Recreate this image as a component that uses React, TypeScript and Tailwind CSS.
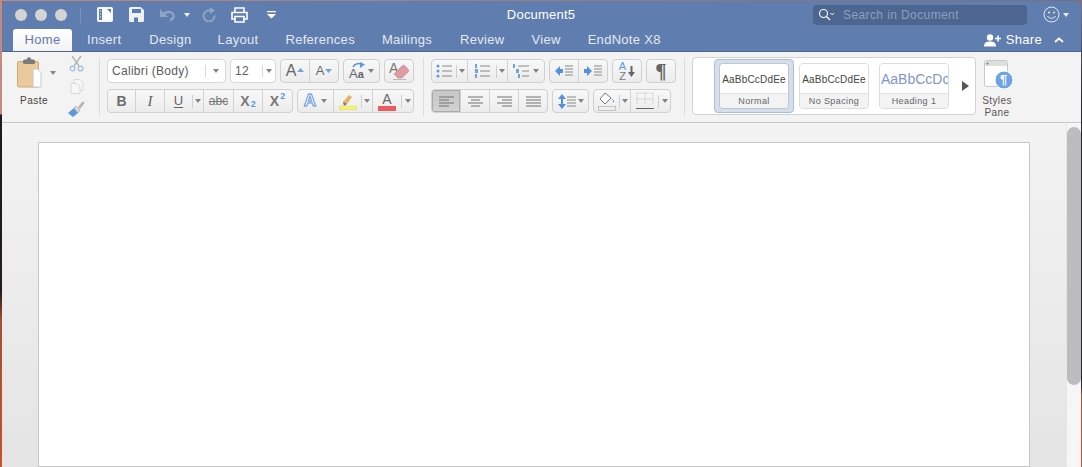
import type { ReactNode } from "react";

const tabs = [
  { label: "Insert", cls: "" },
  { label: "Design", cls: "ml-[1px]" },
  { label: "Layout", cls: "-ml-[1px]" },
  { label: "References", cls: "" },
  { label: "Mailings", cls: "" },
  { label: "Review", cls: "ml-[1px]" },
  { label: "View", cls: "" },
  { label: "EndNote X8", cls: "" },
];

function Caret({ className = "fill-[#858585]" }: { className?: string }) {
  return (
    <svg width="6" height="4" viewBox="0 0 6 4" className={className}>
      <path d="M0 0h6L3 4z" />
    </svg>
  );
}

function Seg({ w, active, open, children }: { w: number; active?: boolean; open?: boolean; children?: ReactNode }) {
  return (
    <div
      style={{ width: w }}
      className={`flex h-full items-center justify-center ${open ? "" : "border-r border-[#d2d2d2] last:border-r-0"} ${active ? "bg-gradient-to-b from-[#c6c6c6] to-[#d2d2d2] shadow-[inset_0_0_0_1px_#ababab]" : ""}`}
    >
      {children}
    </div>
  );
}

// short divider in front of a split button's caret
function Tick() {
  return <span className="h-[13px] self-center border-l border-[#cfcfcf]" />;
}

function Group({ ml = 4, children }: { ml?: number; children: ReactNode }) {
  return (
    <div
      style={{ marginLeft: ml }}
      className="flex h-6 overflow-hidden rounded-[4px] border border-[#d0d0d0] bg-gradient-to-b from-[#f8f8f8] to-[#ececec]"
    >
      {children}
    </div>
  );
}

function Combo({ w, label, inner }: { w: number; label: string; inner: number }) {
  return (
    <div style={{ width: w, marginRight: 4 }} className="flex h-6 items-center rounded-[4px] border border-[#d8d8d8] bg-white text-[12px] text-[#5c5c5c]">
      <span style={{ width: inner }} className="pl-[4px] tracking-[0.3px]">{label}</span>
      <span className="h-3 border-l border-[#d8d8d8]" />
      <span className="flex flex-1 justify-center"><Caret /></span>
    </div>
  );
}

function ListIcon({ kind }: { kind: "bullet" | "number" | "multi" }) {
  return (
    <svg width="17" height="14" viewBox="0 0 17 14">
      {kind === "bullet" && (
        <g fill="#5d97dc">
          <circle cx="2" cy="2" r="1.5" />
          <circle cx="2" cy="7" r="1.5" />
          <circle cx="2" cy="12" r="1.5" />
        </g>
      )}
      {kind !== "bullet" && (
        <g fill="#6ea4e4">
          <rect x={kind === "multi" ? 0 : 1} y="0" width="2" height="4" />
          <rect x={kind === "multi" ? 3 : 1} y="5" width="3" height="4" />
          <rect x={kind === "multi" ? 5 : 1} y="10" width="2" height="4" />
        </g>
      )}
      <path
        d={kind === "multi" ? "M5 2h11M9 7h7M9 12h7" : "M6 2h10M6 7h10M6 12h10"}
        stroke="#888"
        strokeWidth="1"
      />
    </svg>
  );
}

function AlignIcon({ kind }: { kind: "left" | "center" | "right" | "justify" }) {
  const d = {
    left: "M1 2h15M1 5h10M1 8h15M1 11h10",
    center: "M1 2h15M4 5h9M1 8h15M4 11h9",
    right: "M1 2h15M6 5h10M1 8h15M6 11h10",
    justify: "M1 2h15M1 5h15M1 8h15M1 11h15",
  }[kind];
  return (
    <svg width="17" height="13" viewBox="0 0 17 13">
      <path d={d} stroke="#717171" strokeWidth="1" />
    </svg>
  );
}

function IndentIcon({ dir }: { dir: "in" | "out" }) {
  return (
    <svg width="19" height="12" viewBox="0 0 19 12">
      {dir === "out" ? (
        <path d="M0 6l5-5v3h3v4H5v3z" fill="#4f93e0" />
      ) : (
        <path d="M8 6L3 1v3H0v4h3v3z" fill="#4f93e0" />
      )}
      <path d="M10 1h8M10 4h8M10 7h8M10 10h8" stroke="#888" strokeWidth="1" />
    </svg>
  );
}

function StyleCard({ sample, name, selected, sampleClass }: { sample: string; name: string; selected?: boolean; sampleClass: string }) {
  const card = (
    <div className={`flex h-[46px] w-[70px] flex-col overflow-hidden rounded-[4px] border ${selected ? "border-[#bcc6d4]" : "border-[#dcdcdc]"}`}>
      <div className={`flex h-[31px] items-center overflow-hidden whitespace-nowrap bg-white pt-[2px] ${sampleClass}`}>{sample}</div>
      <div className="flex flex-1 items-center justify-center border-t border-[#e4e4e4] bg-[#f3f3f3] pt-[1px] text-[9px] tracking-[0.4px] text-[#666]">{name}</div>
    </div>
  );
  if (selected) {
    return <div className="flex h-[54px] w-[80px] items-center justify-center rounded-[4px] border border-[#a9bfdc] bg-[#d5dfec]">{card}</div>;
  }
  return card;
}

export default function App() {
  return (
    <div className="flex h-[467px] w-[1082px] flex-col overflow-hidden bg-[#8a6a72] font-['Liberation_Sans',sans-serif]">
      <div className="h-px bg-gradient-to-r from-[#b98a80] to-[#76707f]" />
      <div className="flex min-h-0 flex-1">
        <div className="w-[2px] bg-[linear-gradient(to_bottom,#c48a80_0,#c48a80_113px,#1e1a22_114px,#241a22_290px,#a8502e_320px,#c9502a_466px)]" />
        <div className="flex min-w-0 flex-1 flex-col">
          <header className="h-[50px] rounded-t-[5px] bg-[#5f7dae]">
            <div className="flex h-[27px] items-center pr-[12px]">
              <div className="ml-[13px] flex gap-2">
                <span className="h-3 w-3 rounded-full bg-[#d4d4d4]" />
                <span className="h-3 w-3 rounded-full bg-[#d4d4d4]" />
                <span className="h-3 w-3 rounded-full bg-[#d4d4d4]" />
              </div>
              <span className="ml-[13px] h-4 border-l border-[#7b94bc]" />
              <svg width="16" height="15" viewBox="0 0 16 15" className="ml-4">
                <rect x=".75" y=".75" width="14.5" height="13.5" rx="1" fill="#fff" stroke="#f2f5f9" strokeWidth="1.5" />
                <path d="M2 2h3v11H2z" fill="#5f7dae" />
                <path d="M3 4h1M3 7h1M3 10h1" stroke="#fff" />
                <path d="M10 2h4v4z" fill="#5f7dae" />
              </svg>
              <svg width="15" height="15" viewBox="0 0 15 15" className="ml-4">
                <path d="M1.5 0h10L15 3v10.5a1.5 1.5 0 0 1-1.5 1.5h-12A1.5 1.5 0 0 1 0 13.5v-12A1.5 1.5 0 0 1 1.5 0z" fill="#eef1f6" />
                <path d="M3 2h9v4H3zM5 10.5h4v4.5H5z" fill="#5f7dae" />
              </svg>
              <svg width="17" height="13" viewBox="0 0 17 13" className="ml-[15px]">
                <path d="M1 1v8h8z" fill="#8ea4c8" />
                <path d="M4.5 6.5C7 3.5 12 3 14 6c1.5 2.5 0 5.5-3 6" fill="none" stroke="#8ea4c8" strokeWidth="2.4" />
              </svg>
              <span className="ml-[8px]"><Caret className="fill-[#eef1f6]" /></span>
              <svg width="14" height="15" viewBox="0 0 14 15" className="ml-[12px]">
                <path d="M9.5 4a5.5 5.5 0 1 0 3 4.5" fill="none" stroke="#8ea4c8" strokeWidth="2" />
                <path d="M8 0v7l5-3.5z" fill="#8ea4c8" />
              </svg>
              <svg width="17" height="16" viewBox="0 0 17 16" className="ml-[15px]">
                <path d="M4 5V1h9v4M4 12H1V5.5h15V12h-3" fill="none" stroke="#fff" strokeWidth="1.6" />
                <path d="M4 9.5h9V15H4z" fill="none" stroke="#fff" strokeWidth="1.6" />
              </svg>
              <svg width="9" height="8" viewBox="0 0 9 8" className="ml-[19px]">
                <path d="M0 0h9v1.2H0zM0 3h9L4.5 7.5z" fill="#fff" />
              </svg>
              <div className="flex flex-1 justify-center pr-[7px] text-[13px] tracking-[0.2px] text-white">Document5</div>
              <div className="flex h-5 w-[214px] items-center rounded-[4px] bg-[#4d668f] pl-[5px]">
                <svg width="17" height="13" viewBox="0 0 17 13">
                  <circle cx="5.5" cy="5.5" r="4" fill="none" stroke="#fff" strokeWidth="1.1" />
                  <path d="M8.5 8.5l3.5 3.5" stroke="#fff" strokeWidth="1.2" />
                  <path d="M12.5 5l1.7 1.8L16 5" fill="none" stroke="#fff" />
                </svg>
                <span className="ml-[8px] text-[12px] tracking-[0.4px] text-[#8ba0c2]">Search in Document</span>
              </div>
              <svg width="17" height="17" viewBox="0 0 17 17" className="ml-[16px]">
                <circle cx="8.5" cy="8.5" r="7.5" fill="none" stroke="#e8edf5" />
                <circle cx="6" cy="6.5" r="1" fill="#e8edf5" />
                <circle cx="11" cy="6.5" r="1" fill="#e8edf5" />
                <path d="M4.5 10c1.5 3 6.5 3 8 0" fill="none" stroke="#e8edf5" />
              </svg>
              <span className="ml-[3px]"><Caret className="fill-[#e8edf5]" /></span>
            </div>
            <div className="flex h-[23px] items-end text-[13px] tracking-[0.3px] text-[#e3e9f2]">
              <div className="ml-[11px] flex h-[22px] w-[59px] items-center justify-center rounded-t-[3px] bg-gradient-to-b from-white to-[#f3f3f3] text-[#5f7dae]">Home</div>
              <div className="ml-[15px] flex h-[22px] items-center gap-[27px]">
                {tabs.map((t) => (
                  <span key={t.label} className={t.cls}>{t.label}</span>
                ))}
              </div>
              <div className="ml-auto mr-[17px] flex h-[22px] items-center">
                <svg width="17" height="13" viewBox="0 0 17 13">
                  <circle cx="6" cy="3.5" r="3.2" fill="#fff" />
                  <path d="M0 12.5c0-4 2.5-5 6-5s6 1 6 5z" fill="#fff" />
                  <path d="M11 4.5h6M14 1.5v6" stroke="#fff" strokeWidth="1.6" />
                </svg>
                <span className="ml-[5px] text-white">Share</span>
                <svg width="10" height="6" viewBox="0 0 10 6" className="ml-[12px]">
                  <path d="M1 5l4-3.5L9 5" fill="none" stroke="#fff" strokeWidth="1.8" />
                </svg>
              </div>
            </div>
          </header>

          <div className="flex h-[72px] border-y border-t-[#4d668f] border-b-[#c8c8c8] bg-[#f3f3f3]">
            {/* clipboard */}
            <div className="flex w-[97px] pl-[15px]">
              <div className="flex w-[45px] flex-col pt-[5px]">
                <div className="flex items-end">
                  <svg width="25" height="31" viewBox="0 0 25 31">
                    <rect x="0.5" y="4.5" width="21" height="25.5" rx="1.5" fill="#eac99a" stroke="#cfa873" />
                    <rect x="6" y="2.5" width="12" height="4.5" rx="1.5" fill="#7b7b7b" />
                    <circle cx="12" cy="2.5" r="2.2" fill="#7b7b7b" />
                    <path d="M16 12h4.5l3.5 3.5V30H16z" fill="#fff" stroke="#c8c8c8" />
                  </svg>
                  <span className="mb-[13px] ml-[8px]"><Caret /></span>
                </div>
                <span className="mt-[5px] ml-[3px] text-[10px] tracking-[0.5px] text-[#444]">Paste</span>
              </div>
              <div className="ml-[6px] flex flex-col items-center gap-[7px] pt-[3px]">
                <svg width="15" height="17" viewBox="0 0 15 17">
                  <path d="M3 1l7 10M12 1L5 11" stroke="#b4b4b4" strokeWidth="1.4" />
                  <circle cx="3.5" cy="13.5" r="2.4" fill="none" stroke="#9cbde2" strokeWidth="1.2" />
                  <circle cx="11.5" cy="13.5" r="2.4" fill="none" stroke="#9cbde2" strokeWidth="1.2" />
                </svg>
                <svg width="14" height="15" viewBox="0 0 14 15">
                  <path d="M4 .5h6l3 3v8H4z" fill="#f7f7f7" stroke="#d8d8d8" />
                  <path d="M1 4.5h6l3 3v7H1z" fill="#f7f7f7" stroke="#d8d8d8" />
                </svg>
                <svg width="17" height="16" viewBox="0 0 17 16">
                  <path d="M0 12l6-5 4 5-5 4z" fill="#5d97dc" />
                  <path d="M6 7l2-2 4 4-2 3z" fill="#dcdcdc" stroke="#999" strokeWidth=".6" />
                  <path d="M10 6l4-5c2-1 3 1 2 2l-4 5z" fill="#b4b4b4" />
                </svg>
              </div>
            </div>
            <div className="my-[6px] border-l border-[#dcdcdc]" />

            {/* font */}
            <div className="flex w-[323px] flex-col gap-[6px] pt-[7px] pl-[7px]">
              <div className="flex">
                <Combo w={119} inner={97} label="Calibri (Body)" />
                <Combo w={46} inner={31} label="12" />
                <Group ml={0}>
                  <Seg w={29}>
                    <span className="text-[16px] text-[#666]">A</span>
                    <svg width="7" height="4" viewBox="0 0 7 4" className="ml-[1px] mb-[3px]"><path d="M0 4h7L3.5 0z" fill="#6ea4e4" /></svg>
                  </Seg>
                  <Seg w={28}>
                    <span className="text-[13px] text-[#666]">A</span>
                    <svg width="7" height="4" viewBox="0 0 7 4" className="ml-[1px]"><path d="M0 0h7L3.5 4z" fill="#6ea4e4" /></svg>
                  </Seg>
                </Group>
                <Group>
                  <Seg w={35}>
                    <div className="relative flex h-full items-end pb-[2px] leading-none text-[#666]">
                      <span className="text-[13px]">A</span>
                      <span className="text-[11px] font-bold">a</span>
                      <svg width="13" height="8" viewBox="0 0 13 8" className="absolute left-[3px] top-[2px]">
                        <path d="M1 5c2-3 5-4 8-3" fill="none" stroke="#5d97dc" strokeWidth="1.5" />
                        <path d="M8 0l5 2.5L8 6z" fill="#5d97dc" />
                      </svg>
                    </div>
                    <span className="ml-[4px]"><Caret /></span>
                  </Seg>
                </Group>
                <Group>
                  <Seg w={28}>
                    <div className="relative h-full w-[24px]">
                      <span className="absolute left-[2px] top-[1px] text-[14px] leading-none text-[#777]">A</span>
                      <svg width="18" height="16" viewBox="0 0 18 16" className="absolute left-[6px] top-[4px]">
                        <path d="M1 10l8-8c1-1 2-1 3 0l3 3c1 1 1 2 0 3l-6 6H5z" fill="#dd9ba2" stroke="#c78088" strokeWidth=".6" />
                        <path d="M0 15.5h13" stroke="#b8b8b8" />
                      </svg>
                    </div>
                  </Seg>
                </Group>
              </div>
              <div className="flex">
                <Group ml={0}>
                  <Seg w={28}><span className="text-[14px] font-bold text-[#6c6c6c]">B</span></Seg>
                  <Seg w={29}><span className="font-['Liberation_Serif',serif] text-[15px] italic text-[#666]">I</span></Seg>
                  <Seg w={27} open><span className="text-[13px] text-[#666] underline underline-offset-2">U</span></Seg>
                  <Tick />
                  <Seg w={11}><Caret /></Seg>
                  <Seg w={30}><span className="text-[12px] text-[#777] line-through">abc</span></Seg>
                  <Seg w={29}>
                    <span className="text-[14px] font-bold text-[#777]">X</span>
                    <span className="mt-[8px] ml-[1px] text-[9px] font-bold text-[#5d97dc]">2</span>
                  </Seg>
                  <Seg w={29}>
                    <span className="text-[14px] font-bold text-[#777]">X</span>
                    <span className="mb-[8px] ml-[1px] text-[9px] font-bold text-[#5d97dc]">2</span>
                  </Seg>
                </Group>
                <Group>
                  <Seg w={36}>
                    <span className="text-[17px] font-bold text-white [-webkit-text-stroke:1px_#5d97dc]">A</span>
                    <span className="ml-[5px]"><Caret /></span>
                  </Seg>
                  <Seg w={27} open>
                    <svg width="18" height="18" viewBox="0 0 18 18">
                      <path d="M4 10l6-7 3 2-5 7H5z" fill="#e3b264" />
                      <path d="M4 10l4 2-3 2z" fill="#777" />
                      <path d="M0 14h18v3.5H0z" fill="#f9f36a" stroke="#d9d46a" strokeWidth=".5" />
                    </svg>
                  </Seg>
                  <Tick />
                  <Seg w={11}><Caret /></Seg>
                  <Seg w={28} open>
                    <div className="flex flex-col items-center leading-none">
                      <span className="text-[14px] text-[#666]">A</span>
                      <span className="h-[5px] w-[18px] bg-[#ef5a5f]" />
                    </div>
                  </Seg>
                  <Tick />
                  <Seg w={11}><Caret /></Seg>
                </Group>
              </div>
            </div>
            <div className="my-[6px] border-l border-[#dcdcdc]" />

            {/* paragraph */}
            <div className="flex w-[260px] flex-col gap-[6px] pt-[7px] pl-[7px]">
              <div className="flex">
                <Group ml={0}>
                  <Seg w={24} open><ListIcon kind="bullet" /></Seg>
                  <Tick />
                  <Seg w={11}><Caret /></Seg>
                  <Seg w={28} open><ListIcon kind="number" /></Seg>
                  <Tick />
                  <Seg w={11}><Caret /></Seg>
                  <Seg w={36} open>
                    <ListIcon kind="multi" />
                    <span className="ml-[3px]"><Caret /></span>
                  </Seg>
                </Group>
                <Group>
                  <Seg w={29}><IndentIcon dir="out" /></Seg>
                  <Seg w={28}><IndentIcon dir="in" /></Seg>
                </Group>
                <Group>
                  <Seg w={28}>
                    <div className="flex flex-col text-center text-[11px] leading-[10px] text-[#777]"><span className="text-[#5d97dc]">A</span><span>Z</span></div>
                    <svg width="7" height="11" viewBox="0 0 7 11" className="ml-[2px]"><path d="M2.5 0h2v6H7l-3.5 5L0 6h2.5z" fill="#666" /></svg>
                  </Seg>
                </Group>
                <Group>
                  <Seg w={28}><span className="font-['Liberation_Serif',serif] text-[21px] font-bold leading-none text-[#666]">¶</span></Seg>
                </Group>
              </div>
              <div className="flex">
                <Group ml={0}>
                  <Seg w={29} active><AlignIcon kind="left" /></Seg>
                  <Seg w={29}><AlignIcon kind="center" /></Seg>
                  <Seg w={29}><AlignIcon kind="right" /></Seg>
                  <Seg w={28}><AlignIcon kind="justify" /></Seg>
                </Group>
                <Group>
                  <Seg w={35}>
                    <svg width="18" height="15" viewBox="0 0 18 15">
                      <path d="M4 0l4 5H0zM4 15l4-5H0z" fill="#4f93e0" />
                      <path d="M3 5h2v5H3z" fill="#4f93e0" />
                      <path d="M9 3h9M9 6h9M9 9h9M9 12h9" stroke="#888" />
                    </svg>
                    <span className="ml-[2px]"><Caret /></span>
                  </Seg>
                </Group>
                <Group>
                  <Seg w={25} open>
                    <svg width="18" height="19" viewBox="0 0 18 19">
                      <path d="M7 1L2 7l5 5 6-6z" fill="#fff" stroke="#777" />
                      <path d="M13 6c2 1 3 3 3 4s-1 1-1 0-1-3-2-4z" fill="#5d97dc" />
                      <rect x=".5" y="14.5" width="17" height="4" fill="#eee" stroke="#c4c4c4" />
                    </svg>
                  </Seg>
                  <Tick />
                  <Seg w={11}><Caret /></Seg>
                  <Seg w={27} open>
                    <svg width="18" height="18" viewBox="0 0 18 18">
                      <path d="M1 1h16M1 1v12M17 1v12M9 1v12M1 7h16" stroke="#b4b4b4" strokeDasharray="1 1.4" fill="none" />
                      <path d="M0 16.5h18" stroke="#666" />
                    </svg>
                  </Seg>
                  <Tick />
                  <Seg w={11}><Caret /></Seg>
                </Group>
              </div>
            </div>
            <div className="my-[6px] border-l border-[#dcdcdc]" />

            {/* styles gallery */}
            <div className="ml-[7px] mt-[5px] flex h-[58px] w-[284px] items-center rounded-[4px] border border-[#d2d2d2] bg-white pl-[21px]">
              <StyleCard selected sample="AaBbCcDdEe" name="Normal" sampleClass="justify-center text-[10px] tracking-[0.2px] text-[#444]" />
              <div className="ml-[5px]">
                <StyleCard sample="AaBbCcDdEe" name="No Spacing" sampleClass="justify-center text-[10px] tracking-[0.2px] text-[#444]" />
              </div>
              <div className="ml-[10px]">
                <StyleCard sample="AaBbCcDc" name="Heading 1" sampleClass="pl-[1px] text-[14px] text-[#8197c8]" />
              </div>
              <svg width="7" height="10" viewBox="0 0 7 10" className="ml-[13px]"><path d="M0 0l7 5-7 5z" fill="#555" /></svg>
            </div>
            <div className="ml-[8px] flex w-[30px] flex-col pt-[8px]">
              <div className="relative h-[29px] w-[30px]">
                <svg width="30" height="29" viewBox="0 0 30 29">
                  <rect x=".5" y=".5" width="23" height="26" rx="2" fill="#fff" stroke="#c8c8c8" />
                  <path d="M1 1h22v5H1z" fill="#dedede" />
                  <circle cx="3.5" cy="3.5" r="1" fill="#777" />
                  <circle cx="20" cy="20" r="9" fill="#6ea4e4" stroke="#fff" />
                </svg>
                <span className="absolute left-[16px] top-[13px] text-[13px] font-bold leading-[14px] text-white">¶</span>
              </div>
              <div className="mt-[6px] flex w-[26px] flex-col items-center text-[10px] leading-[12px] tracking-[0.4px] text-[#555]">
                <span className="whitespace-nowrap">Styles</span>
                <span>Pane</span>
              </div>
            </div>
          </div>

          {/* document canvas */}
          <div className="flex min-h-0 flex-1 bg-gradient-to-b from-[#f3f3f3] to-[#e4e4e4]">
            <div className="ml-[36px] mt-[19px] w-[992px] border border-[#c6c6c6] bg-white" />
            <div className="ml-[36px] flex flex-1 flex-col border-l border-[#e6e6e6] bg-[#f6f6f6] pt-[4px]">
              <div className="h-[258px] rounded-full bg-[#bcbcbc]" />
            </div>
          </div>
        </div>
        <div className="w-px bg-[linear-gradient(to_bottom,#7a7485_0,#2a2630_100px,#2a2630_385px,#b9552c_395px,#c9502a_466px)]" />
      </div>
    </div>
  );
}
